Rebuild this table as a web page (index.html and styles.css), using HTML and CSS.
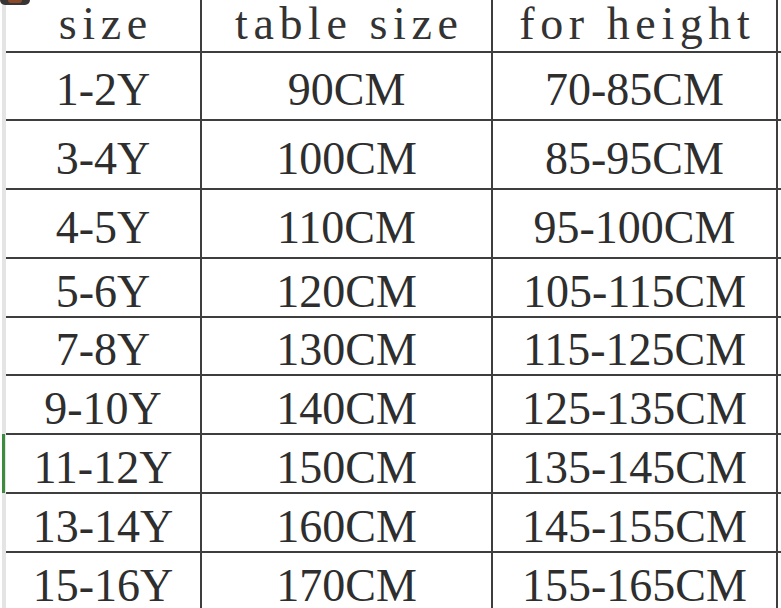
FILE: index.html
```html
<!DOCTYPE html>
<html lang="en">
<head>
<meta charset="utf-8">
<title>Size chart</title>
<link rel="stylesheet" href="styles.css">
</head>
<body>
<div class="page">
  <div class="badge"><span class="badge-dot"></span></div>
  <div class="gutter"></div>
  <div class="sheet">
    <div class="cell head">size</div><div class="cell head">table size</div><div class="cell head">for height</div><div class="cell edge"></div>
    <div class="cell">1-2Y</div><div class="cell">90CM</div><div class="cell">70-85CM</div><div class="cell edge"></div>
    <div class="cell">3-4Y</div><div class="cell">100CM</div><div class="cell">85-95CM</div><div class="cell edge"></div>
    <div class="cell">4-5Y</div><div class="cell">110CM</div><div class="cell">95-100CM</div><div class="cell edge"></div>
    <div class="cell">5-6Y</div><div class="cell">120CM</div><div class="cell">105-115CM</div><div class="cell edge"></div>
    <div class="cell">7-8Y</div><div class="cell">130CM</div><div class="cell">115-125CM</div><div class="cell edge"></div>
    <div class="cell">9-10Y</div><div class="cell">140CM</div><div class="cell">125-135CM</div><div class="cell edge"></div>
    <div class="cell sel">11-12Y</div><div class="cell">150CM</div><div class="cell">135-145CM</div><div class="cell edge"></div>
    <div class="cell">13-14Y</div><div class="cell">160CM</div><div class="cell">145-155CM</div><div class="cell edge"></div>
    <div class="cell">15-16Y</div><div class="cell">170CM</div><div class="cell">155-165CM</div><div class="cell edge"></div>
  </div>
</div>
</body>
</html>
```

FILE: styles.css
```css
html, body {
  margin: 0;
  padding: 0;
  background: #ffffff;
}

body {
  width: 781px;
  height: 608px;
  overflow: hidden;
}

.page {
  position: relative;
  display: flex;
  height: 100%;
}

.badge {
  position: absolute;
  left: 0;
  top: 0;
  width: 30px;
  height: 5px;
  background: #3a3535;
  border-radius: 0 0 7px 7px;
  z-index: 2;
}

.badge-dot {
  position: absolute;
  left: 8px;
  top: 0;
  width: 14px;
  height: 3px;
  border-radius: 0 0 3px 3px;
  background: #8a4a2a;
}

.gutter {
  width: 4px;
  margin-left: 2px;
  background: #e4e4e4;
  flex: none;
}

.sheet {
  flex: 1;
  display: grid;
  grid-template-columns: 196px 291px 285px 1fr;
  grid-template-rows: 53px 68px 69px 69px 59px 58px 59px 59px 59px 60px;
  font-family: "Liberation Serif", "Times New Roman", serif;
  font-size: 46px;
  color: #2e2e2e;
}

.cell {
  box-sizing: border-box;
  display: flex;
  align-items: center;
  justify-content: center;
  padding-top: 8px;
  border-bottom: 2px solid #3e3e3e;
  border-right: 2px solid #3e3e3e;
  white-space: nowrap;
  line-height: 44px;
}

.cell.edge {
  border-right: none;
}

.cell.head {
  padding-top: 0;
  padding-bottom: 4px;
  letter-spacing: 5.6px;
  text-indent: 5.6px;
  color: #333333;
}

.cell.sel {
  position: relative;
}

.cell.sel::before {
  content: "";
  position: absolute;
  left: -4px;
  top: -1px;
  bottom: -1px;
  width: 3px;
  background: #3d8b3d;
}
```
